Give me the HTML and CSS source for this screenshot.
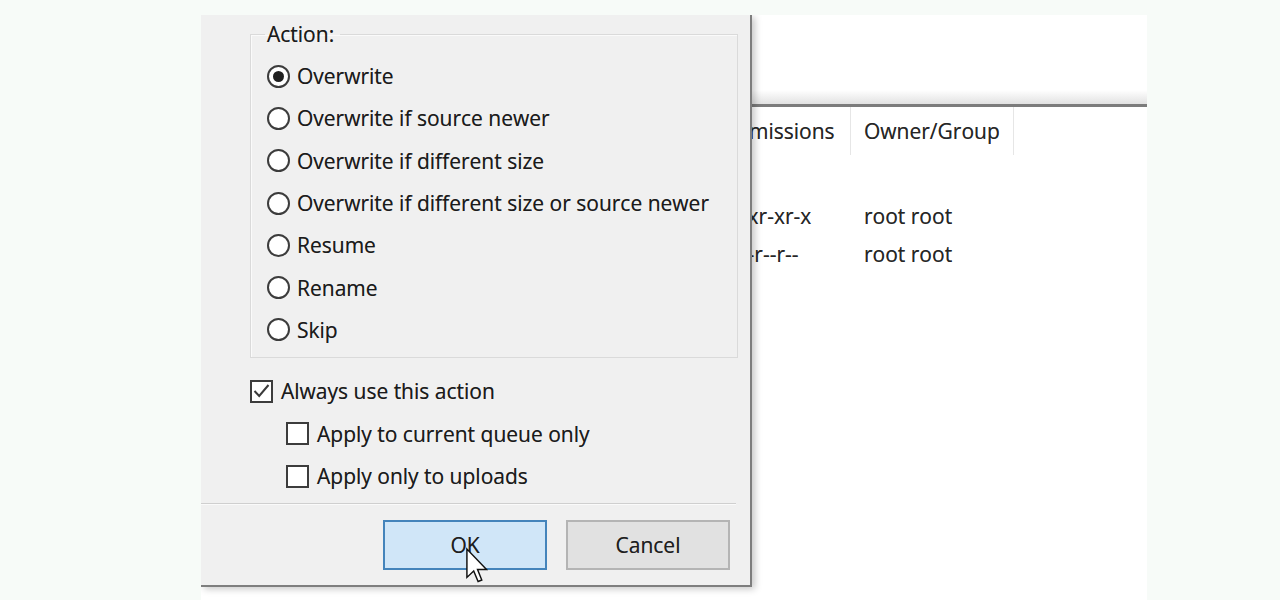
FILE: index.html
```html
<!DOCTYPE html>
<html lang="en">
<head>
<meta charset="utf-8">
<title>Target file already exists</title>
<link rel="stylesheet" href="styles.css">
</head>
<body>
<div class="stage">
  <div class="listing">
    <div class="toparea"></div>
    <div class="splitter"></div>
    <div class="row header">
      <div class="cell c-name"></div>
      <div class="cell c-perm">Permissions</div>
      <div class="cell c-owner">Owner/Group</div>
    </div>
    <div class="rows">
      <div class="row"><div class="cell c-name"></div><div class="cell c-perm"></div><div class="cell c-owner"></div></div>
      <div class="row"><div class="cell c-name"></div><div class="cell c-perm">-rwxr-xr-x</div><div class="cell c-owner">root root</div></div>
      <div class="row"><div class="cell c-name"></div><div class="cell c-perm">-rw-r--r--</div><div class="cell c-owner">root root</div></div>
    </div>
  </div>

  <div class="dialog">
    <fieldset class="group">
      <legend>Action:</legend>
      <div class="radios">
        <label class="opt"><span class="radio on"></span>Overwrite</label>
        <label class="opt"><span class="radio"></span>Overwrite if source newer</label>
        <label class="opt"><span class="radio"></span>Overwrite if different size</label>
        <label class="opt"><span class="radio"></span>Overwrite if different size or source newer</label>
        <label class="opt"><span class="radio"></span>Resume</label>
        <label class="opt"><span class="radio"></span>Rename</label>
        <label class="opt"><span class="radio"></span>Skip</label>
      </div>
    </fieldset>
    <div class="checks">
      <label class="chk"><span class="box"><svg viewBox="0 0 19 19" width="19" height="19"><path d="M2.5 9 L7.2 14 L16.5 3" fill="none" stroke="#3a3a3a" stroke-width="2"/></svg></span>Always use this action</label>
      <label class="chk sub"><span class="box"></span>Apply to current queue only</label>
      <label class="chk sub"><span class="box"></span>Apply only to uploads</label>
    </div>
    <div class="sep"></div>
    <div class="buttons">
      <button class="btn default">OK</button>
      <button class="btn">Cancel</button>
    </div>
    <svg class="cursor" viewBox="0 0 12 19" width="22" height="37"><path d="M0.5 0.5 L0.5 16 L4.2 12.5 L6.6 18.2 L8.6 17.4 L6.3 11.7 L11.2 11.7 Z" fill="#fff" stroke="#111" stroke-width="0.8" stroke-linejoin="miter"/></svg>
  </div>
</div>
</body>
</html>
```

FILE: styles.css
```css
* { box-sizing: border-box; }

body {
  margin: 0;
  background: #f7fbf8;
  font-family: "Open Sans", "Noto Sans", sans-serif;
  color: #1e1e1e;
}

.stage {
  position: relative;
  margin: 15px 0 0 201px;
  width: 946px;
  height: 585px;
  background: #fff;
  overflow: hidden;
}

/* file listing behind the dialog */
.listing {
  display: flex;
  flex-direction: column;
  height: 100%;
}
.toparea { height: 75px; }
.splitter {
  height: 17px;
  background: linear-gradient(#ffffff, #e2e2e2);
  border-bottom: 3px solid #7c7c7c;
}
.row {
  display: flex;
  align-items: center;
  height: 38px;
  font-size: 21px;
  color: #262626;
  text-shadow: 0 0 0.5px rgba(0, 0, 0, 0.5);
}
.row.header { height: 48px; }
.header .cell {
  height: 100%;
  display: flex;
  align-items: center;
  border-right: 1px solid #e6e6e6;
}
.rows { padding-top: 4px; }
.cell { white-space: nowrap; overflow: hidden; }
.c-name { width: 502px; padding-left: 12px; }
.c-perm { width: 148px; padding-left: 13px; }
.c-owner { width: 163px; padding-left: 13px; }

/* dialog */
.dialog {
  position: absolute;
  left: 0;
  top: 0;
  width: 551px;
  height: 572px;
  background: #f0f0f0;
  border-right: 2px solid #7e7e7e;
  border-bottom: 2px solid #7e7e7e;
  box-shadow: 3px 2px 7px rgba(0, 0, 0, 0.22);
  display: flex;
  flex-direction: column;
  font-size: 21px;
  color: #1b1b1b;
  text-shadow: 0 0 0.5px rgba(0, 0, 0, 0.5);
}

.group {
  margin: 5px 12px 0 49px;
  padding: 0 0 6px 16px;
  border: 1px solid #dadada;
  box-shadow: inset 1px 1px 0 #fafafa;
  min-width: 0;
}
.group legend {
  padding: 0 6px 0 2px;
  margin-left: -2px;
  line-height: 28px;
}
.radios {
  display: flex;
  flex-direction: column;
  padding-top: 7px;
}
.opt {
  display: flex;
  align-items: center;
  height: 42.3px;
  white-space: nowrap;
}
.radio {
  width: 23px;
  height: 23px;
  border: 2px solid #3c3c3c;
  border-radius: 50%;
  background: #fff;
  margin-right: 7px;
  display: flex;
  align-items: center;
  justify-content: center;
  flex: none;
}
.radio.on::after {
  content: "";
  width: 11px;
  height: 11px;
  border-radius: 50%;
  background: #202020;
}

.checks {
  display: flex;
  flex-direction: column;
  margin: 12px 0 0 49px;
}
.chk {
  display: flex;
  align-items: center;
  height: 42.5px;
  white-space: nowrap;
}
.chk.sub { margin-left: 36px; }
.box {
  width: 23px;
  height: 23px;
  border: 2px solid #3c3c3c;
  background: #fff;
  margin-right: 8px;
  display: flex;
  align-items: center;
  justify-content: center;
  flex: none;
}
.box svg { display: block; }

.sep {
  margin: 5px 14px 0 0;
  height: 2px;
  border-top: 1px solid #cfcfcf;
  border-bottom: 1px solid #fafafa;
}

.buttons {
  display: flex;
  justify-content: flex-end;
  gap: 19px;
  margin: 15px 20px 0 0;
}
.btn {
  width: 164px;
  height: 50px;
  font-family: inherit;
  font-size: 21px;
  color: #1e1e1e;
  background: #e1e1e1;
  border: 2px solid #b4b4b4;
  padding: 0;
  text-shadow: inherit;
}
.btn.default {
  background: #d0e6f8;
  border-color: #4484bb;
}

.cursor {
  position: absolute;
  left: 265px;
  top: 532px;
}
```
